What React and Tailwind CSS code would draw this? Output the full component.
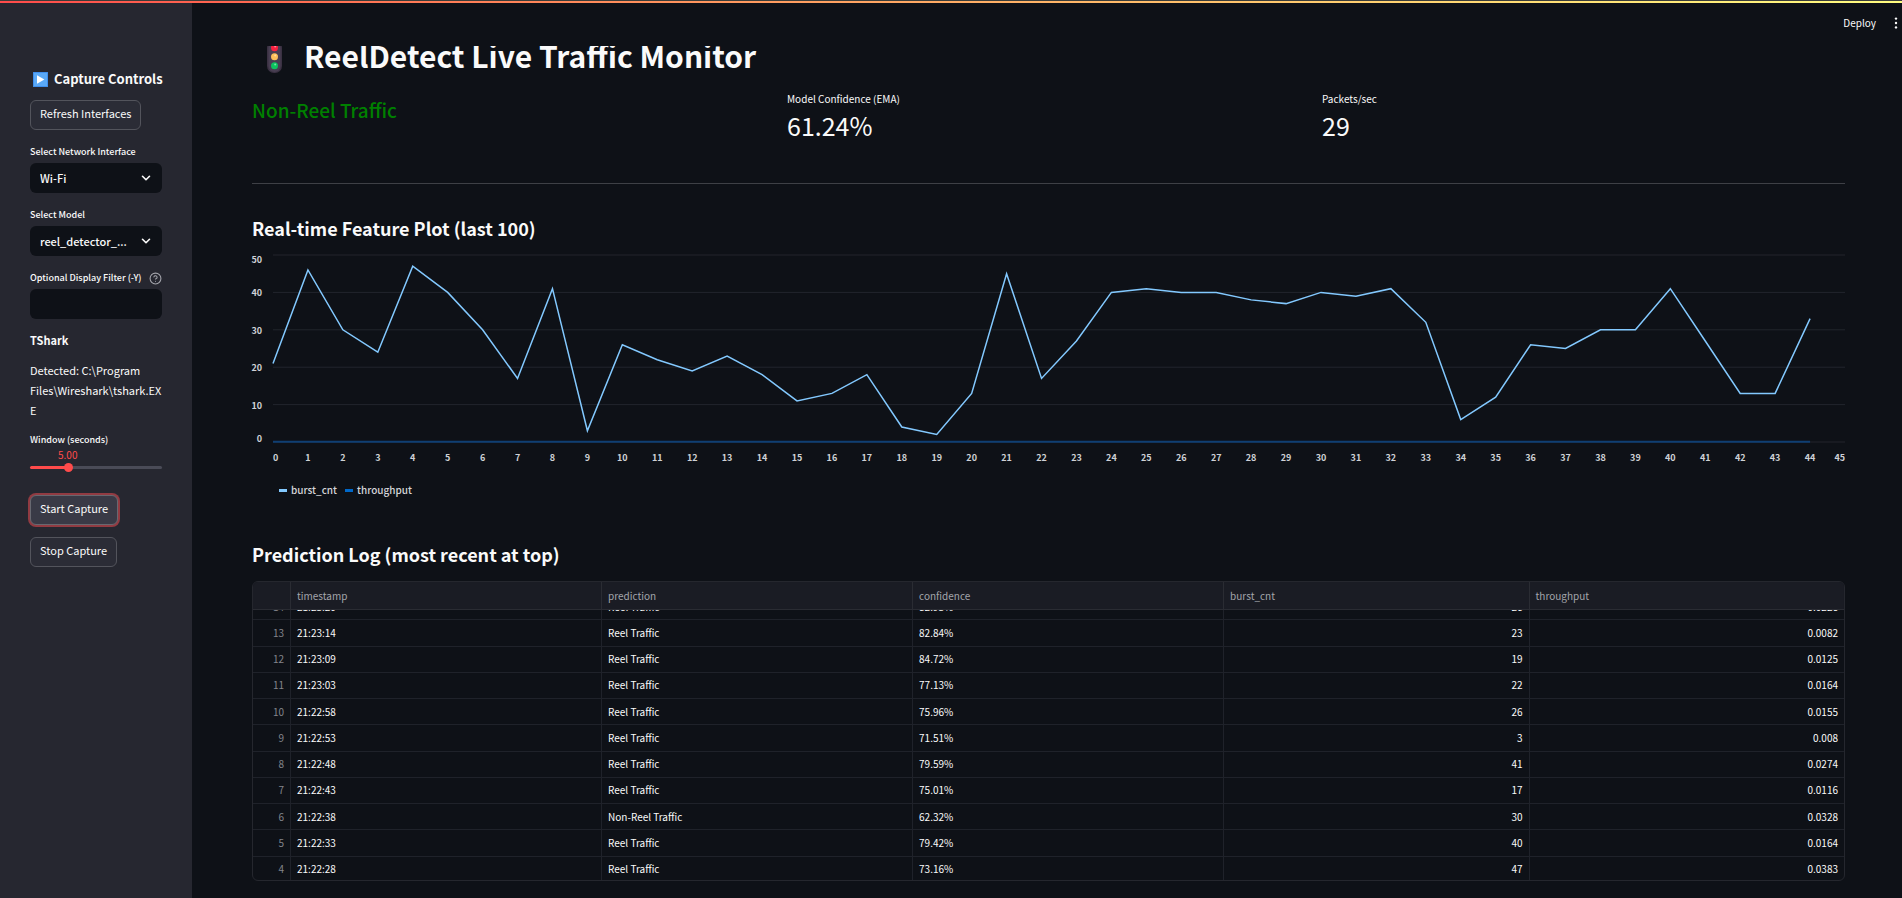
import { useLayoutEffect, useRef } from 'react';
import { ChevronDown, CircleHelp } from 'lucide-react';

const burst = [21, 46, 30, 24, 47, 40, 30, 17, 41, 3, 26, 22, 19, 23, 18, 11, 13, 18, 4, 2, 13, 45, 17, 27, 40, 41, 40, 40, 38, 37, 40, 39, 41, 32, 6, 12, 26, 25, 30, 30, 41, 27, 13, 13, 33];

const rows = [
  [14, '21:23:20', 'Reel Traffic', '82.93%', '26', '0.0226'],
  [13, '21:23:14', 'Reel Traffic', '82.84%', '23', '0.0082'],
  [12, '21:23:09', 'Reel Traffic', '84.72%', '19', '0.0125'],
  [11, '21:23:03', 'Reel Traffic', '77.13%', '22', '0.0164'],
  [10, '21:22:58', 'Reel Traffic', '75.96%', '26', '0.0155'],
  [9, '21:22:53', 'Reel Traffic', '71.51%', '3', '0.008'],
  [8, '21:22:48', 'Reel Traffic', '79.59%', '41', '0.0274'],
  [7, '21:22:43', 'Reel Traffic', '75.01%', '17', '0.0116'],
  [6, '21:22:38', 'Non-Reel Traffic', '62.32%', '30', '0.0328'],
  [5, '21:22:33', 'Reel Traffic', '79.42%', '40', '0.0164'],
  [4, '21:22:28', 'Reel Traffic', '73.16%', '47', '0.0383'],
];

function PlayIcon() {
  return (
    <svg viewBox="0 0 15 15" className="size-[15px] shrink-0" aria-hidden="true">
      <rect width="15" height="15" rx="0.8" fill="#5aa9f7" />
      <rect x="0.5" y="0.5" width="14" height="14" rx="0.6" fill="none" stroke="#3f8fee" />
      <path d="M4 3.2v8.6l7.4-4.3z" fill="#fff" />
    </svg>
  );
}

function TrafficLightIcon() {
  return (
    <svg viewBox="0 0 15 32" className="h-8 w-[15px] shrink-0" aria-hidden="true">
      <rect width="15" height="32" rx="7" fill="#3a3142" />
      <rect x="1.5" y="1" width="12" height="30" rx="6" fill="#483e52" />
      <circle cx="7.5" cy="6.8" r="3.5" fill="#f8213f" />
      <circle cx="7.5" cy="15.8" r="3.5" fill="#fcc05a" />
      <circle cx="7.5" cy="24.8" r="3.5" fill="#0cc15f" />
      <circle cx="8.2" cy="5.6" r="1" fill="#ff8b9a" />
      <circle cx="8.2" cy="14.6" r="1" fill="#ffe0a0" />
      <circle cx="8.2" cy="23.6" r="1" fill="#6be8a0" />
    </svg>
  );
}

function SelectField({ id, label, value }) {
  return (
    <div className="flex flex-col gap-[3px]">
      <label htmlFor={id} className="text-[9px] leading-4 font-medium">{label}</label>
      <div className="relative">
        <select id={id} className="h-[30px] w-full appearance-none rounded-md bg-[#0e1117] pr-8 pl-2.5 text-[11px] leading-[30px] font-medium">
          <option>{value}</option>
        </select>
        <ChevronDown className="pointer-events-none absolute top-2 right-[9px] size-3.5" strokeWidth={2.8} />
      </div>
    </div>
  );
}

function Sidebar() {
  return (
    <aside className="w-48 shrink-0 bg-[#262730] px-[30px] pt-16">
      <h2 className="flex items-center gap-1.5 pl-[3px] text-[13px] leading-6 font-bold whitespace-nowrap">
        <PlayIcon />
        Capture Controls
      </h2>
      <button className="mt-[9px] h-[30px] rounded-md border border-[#53545c] bg-[#2b2c36] px-[9px] pb-1 text-[11px] leading-5 whitespace-nowrap">Refresh Interfaces</button>
      <div className="mt-3.5 flex flex-col gap-3.5">
        <SelectField id="iface" label="Select Network Interface" value="Wi-Fi" />
        <SelectField id="model" label="Select Model" value="reel_detector_..." />
        <div className="flex flex-col gap-[3px]">
          <div className="flex items-center justify-between">
            <label htmlFor="filter" className="text-[9px] leading-4 font-medium whitespace-nowrap">Optional Display Filter (-Y)</label>
            <CircleHelp className="size-[13px] shrink-0 text-[#a3a4ab]" />
          </div>
          <input id="filter" type="text" className="h-[30px] w-full rounded-md bg-[#0e1117] px-2.5 text-[11px]" />
        </div>
      </div>
      <h3 className="mt-[13px] text-[11px] leading-4 font-bold">TShark</h3>
      <p className="mt-3 text-[11px] leading-5 break-words">Detected: C:\Program Files\Wireshark\tshark.EXE</p>
      <div className="mt-3">
        <label htmlFor="window" className="block text-[9px] leading-4 font-medium">Window (seconds)</label>
        <output htmlFor="window" className="block pl-7 text-[10px] leading-[13px] text-[#ff4b4b]">5.00</output>
        <input
          id="window"
          type="range"
          min="0.5"
          max="17"
          step="0.5"
          defaultValue="5"
          className="block h-3 w-full appearance-none bg-transparent [&::-webkit-slider-runnable-track]:h-[3px] [&::-webkit-slider-runnable-track]:rounded-full [&::-webkit-slider-runnable-track]:bg-[linear-gradient(90deg,#ff4b4b_28%,#4a4b57_28%)] [&::-webkit-slider-thumb]:-mt-[3px] [&::-webkit-slider-thumb]:size-[9px] [&::-webkit-slider-thumb]:appearance-none [&::-webkit-slider-thumb]:rounded-full [&::-webkit-slider-thumb]:bg-[#ff4b4b]"
        />
      </div>
      <div className="mt-[22px] flex flex-col items-start gap-3">
        <button className="h-[30px] rounded-md border border-[#676870] bg-[#393a46] px-[9px] pb-1 text-[11px] leading-5 ring-2 ring-[#913b42]">Start Capture</button>
        <button className="h-[30px] rounded-md border border-[#53545c] bg-[#2b2c36] px-[9px] pb-1 text-[11px] leading-5">Stop Capture</button>
      </div>
    </aside>
  );
}

function Chart() {
  const points = burst.map((v, i) => `${i},${50 - v}`).join(' ');
  return (
    <figure>
      <div className="flex">
        <svg className="h-[187px] w-[21px] shrink-0 overflow-visible text-[9px] font-bold" fill="#cfd1d6">
          {[50, 40, 30, 20, 10, 0].map((v, i) => (
            <text key={v} x="10" y={i === 0 ? 8 : i === 5 ? 187 : 37.4 * i + 4} textAnchor="end">{v}</text>
          ))}
        </svg>
        <svg viewBox="0 0 45 50" preserveAspectRatio="none" className="h-[187px] w-full min-w-0 overflow-visible" role="img" aria-label="burst_cnt and throughput">
          {[0, 10, 20, 30, 40, 50].map((v) => (
            <line key={v} x1="0" x2="45" y1={v} y2={v} stroke="#22252d" vectorEffect="non-scaling-stroke" />
          ))}
          <line x1="0" x2="44" y1="49.9" y2="49.9" stroke="#0f3f73" strokeWidth="2" vectorEffect="non-scaling-stroke" />
          <polyline points={points} fill="none" stroke="#83c9ff" strokeWidth="1.5" vectorEffect="non-scaling-stroke" />
        </svg>
      </div>
      <div className="flex pl-[21px]">
        <svg className="h-8 w-full overflow-visible text-[9px] font-bold" fill="#cfd1d6">
          {Array.from({ length: 46 }, (_, i) => (
            <text key={i} x={`${(i * 100) / 45}%`} y="19" textAnchor={i === 0 ? 'start' : i === 45 ? 'end' : 'middle'}>{i}</text>
          ))}
        </svg>
      </div>
      <figcaption className="mt-2 flex gap-2 pl-[27px] text-[10px] leading-4 font-medium text-[#d5d6da]">
        <span className="flex items-center gap-1"><span className="h-[3px] w-2 bg-[#83c9ff]" />burst_cnt</span>
        <span className="flex items-center gap-1"><span className="h-[3px] w-2 bg-[#0068c9]" />throughput</span>
      </figcaption>
    </figure>
  );
}

function LogTable() {
  const scroller = useRef(null);
  useLayoutEffect(() => {
    scroller.current.scrollTop = 16;
  }, []);
  const th = 'h-7 border-r border-b border-[#2a2c33] bg-[#1a1c24] px-1.5 text-left font-normal text-[#a3a5ab] last:border-r-0';
  const td = 'border-r border-b border-[#1f222a] px-1.5 last:border-r-0';
  return (
    <div ref={scroller} className="h-[300px] overflow-auto rounded-md border border-[#25272e] [scrollbar-width:none]">
      <table className="h-[317px] w-full table-fixed border-separate border-spacing-0 text-[10px] leading-4">
        <thead className="sticky top-0">
          <tr>
            <th className={`${th} w-[38px]`} aria-label="index" />
            <th className={`${th} w-[19.55%]`}>timestamp</th>
            <th className={`${th} w-[19.55%]`}>prediction</th>
            <th className={`${th} w-[19.55%]`}>confidence</th>
            <th className={`${th} w-[19.2%]`}>burst_cnt</th>
            <th className={th}>throughput</th>
          </tr>
        </thead>
        <tbody>
          {rows.map(([n, time, pred, conf, cnt, thr]) => (
            <tr key={n}>
              <td className={`${td} text-right text-[#83858c]`}>{n}</td>
              <td className={td}>{time}</td>
              <td className={td}>{pred}</td>
              <td className={td}>{conf}</td>
              <td className={`${td} text-right`}>{cnt}</td>
              <td className={`${td} text-right`}>{thr}</td>
            </tr>
          ))}
        </tbody>
      </table>
    </div>
  );
}

function Metric({ label, value }) {
  return (
    <div>
      <div className="text-[10px] leading-4">{label}</div>
      <div className="text-[25px] leading-9">{value}</div>
    </div>
  );
}

export default function App() {
  return (
    <div className="flex min-h-screen flex-col bg-[#0e1117] font-['Noto_Sans_CJK_SC','Noto_Sans',sans-serif] text-[#fafafa]">
      <div className="h-[3px] border-t border-[#3a3d3a] bg-linear-to-r from-[#ff4b4b] to-[#fffd80]" />
      <div className="flex flex-1">
        <Sidebar />
        <main className="min-w-0 flex-1">
          <header className="flex h-[43px] items-center justify-end gap-4 pr-0.5 pb-1">
            <button className="text-[10px] leading-4">Deploy</button>
            <button aria-label="Main menu" className="w-2">
              <svg viewBox="0 0 8 12" className="h-3 w-2" fill="#fafafa"><circle cx="4" cy="1.6" r="1.2" /><circle cx="4" cy="6" r="1.2" /><circle cx="4" cy="10.4" r="1.2" /></svg>
            </button>
          </header>
          <div className="pr-[57px] pl-[60px]">
            <h1 className="flex h-[27px] items-end gap-[22px] overflow-hidden pl-[15px] text-[30px] leading-9 font-bold">
              <TrafficLightIcon />
              ReelDetect Live Traffic Monitor
            </h1>
            <section className="mt-[18px] grid grid-cols-3 gap-3">
              <p className="pt-[5px] text-[19px] leading-7 font-medium text-[#008000]">Non-Reel Traffic</p>
              <Metric label="Model Confidence (EMA)" value="61.24%" />
              <Metric label="Packets/sec" value="29" />
            </section>
            <hr className="mt-10 border-[#3e4046]" />
            <h2 className="mt-[30px] mb-[13px] text-[18px] leading-7 font-bold">Real-time Feature Plot (last 100)</h2>
            <Chart />
            <h2 className="mt-[42px] mb-[13px] text-[18px] leading-7 font-bold">Prediction Log (most recent at top)</h2>
            <LogTable />
          </div>
        </main>
      </div>
    </div>
  );
}
